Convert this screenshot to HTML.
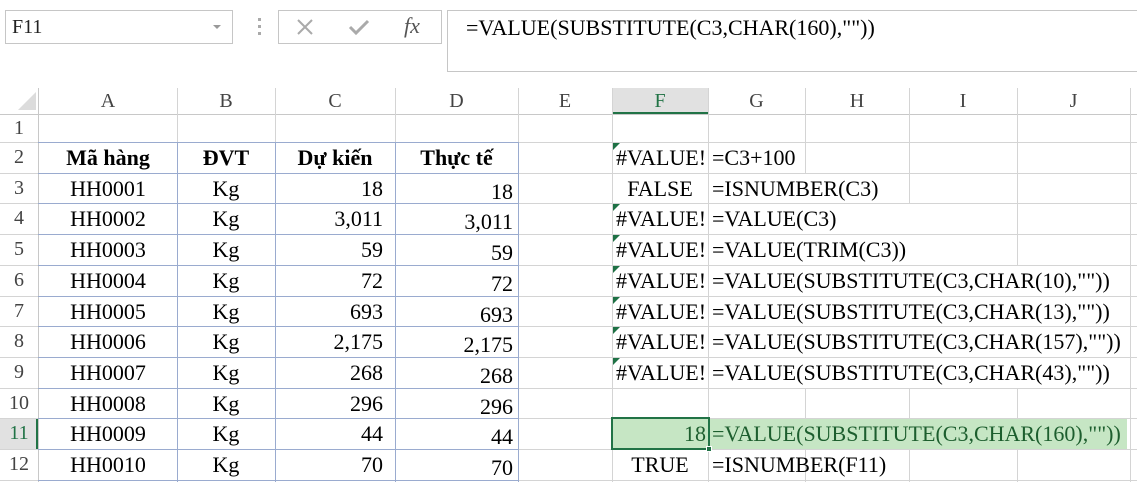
<!DOCTYPE html>
<html><head><meta charset="utf-8"><style>
body{margin:0;width:1137px;height:482px;background:#fff;position:relative;overflow:hidden;font-family:"Liberation Serif","Times New Roman","DejaVu Serif",serif;}
div{position:absolute;box-sizing:border-box;font-family:"Liberation Serif","Times New Roman","DejaVu Serif",serif;}
.h{height:1px;background:#d4d4d4;}
.v{width:1px;background:#d4d4d4;}
.bh{height:1px;background:#9aabcf;}
.bv{width:1px;background:#9aabcf;}
.t{font-size:22px;line-height:31px;white-space:nowrap;color:#000;}
.c{text-align:center}.r{text-align:right}
.ch{top:88px;height:26px;font-size:20px;line-height:26px;text-align:center;color:#444;}
.rh{left:0;width:38px;font-size:20px;line-height:31px;text-align:center;color:#444;}
.tri{width:0;height:0;border-top:7px solid #1e7145;border-right:7px solid transparent;}
</style></head><body>
<div style="left:5px;top:10px;width:228px;height:34px;border:1px solid #c6c6c6;"></div>
<div class="t" style="left:12px;top:12px;font-size:20px;line-height:30px;color:#222">F11</div>
<div style="left:213px;top:25px;border-left:4px solid transparent;border-right:4px solid transparent;border-top:4px solid #999;"></div>
<div style="left:258px;top:18px;width:3px;height:3px;background:#aaa"></div>
<div style="left:258px;top:25px;width:3px;height:3px;background:#aaa"></div>
<div style="left:258px;top:32px;width:3px;height:3px;background:#aaa"></div>
<div style="left:278px;top:10px;width:164px;height:34px;border:1px solid #c6c6c6;"></div>
<svg style="position:absolute;left:296px;top:18px" width="18" height="18"><path d="M2 2L16 16M16 2L2 16" stroke="#aaa" stroke-width="2"/></svg>
<svg style="position:absolute;left:348px;top:18px" width="22" height="18"><path d="M2 9L8 15L20 3" stroke="#aaa" stroke-width="3" fill="none"/></svg>
<div style="left:404px;top:13px;font-size:22px;color:#555;font-style:italic;line-height:26px">fx</div>
<div style="left:447px;top:10px;width:700px;height:62px;border:1px solid #c6c6c6;"></div>
<div class="t" style="left:466px;top:11px;line-height:34px">=VALUE(SUBSTITUTE(C3,CHAR(160),""))</div>
<div style="left:18px;top:92px;width:0;height:0;border-bottom:18px solid #dcdcdc;border-left:18px solid transparent;"></div>
<div style="left:612px;top:88px;width:96px;height:26px;background:#e1e1e1;border-bottom:2px solid #217346;"></div>
<div style="left:0;top:418px;width:38px;height:31px;background:#e1e1e1;border-right:2px solid #217346;"></div>
<div class="h" style="left:0;top:114px;width:1137px;background:#c8c8c8"></div>
<div class="v" style="left:38px;top:88px;height:394px;background:#c8c8c8"></div>
<div class="v" style="left:177px;top:88px;height:26px"></div>
<div class="v" style="left:275px;top:88px;height:26px"></div>
<div class="v" style="left:395px;top:88px;height:26px"></div>
<div class="v" style="left:518px;top:88px;height:26px"></div>
<div class="v" style="left:612px;top:88px;height:26px"></div>
<div class="v" style="left:708px;top:88px;height:26px"></div>
<div class="v" style="left:805px;top:88px;height:26px"></div>
<div class="v" style="left:909px;top:88px;height:26px"></div>
<div class="v" style="left:1017px;top:88px;height:26px"></div>
<div class="v" style="left:1130px;top:88px;height:26px"></div>
<div class="ch" style="left:39px;width:138px">A</div>
<div class="ch" style="left:177px;width:98px">B</div>
<div class="ch" style="left:275px;width:120px">C</div>
<div class="ch" style="left:395px;width:123px">D</div>
<div class="ch" style="left:518px;width:94px">E</div>
<div class="ch" style="left:612px;width:96px;color:#217346">F</div>
<div class="ch" style="left:708px;width:97px">G</div>
<div class="ch" style="left:805px;width:104px">H</div>
<div class="ch" style="left:909px;width:108px">I</div>
<div class="ch" style="left:1017px;width:113px">J</div>
<div style="left:612px;top:418px;width:515px;height:31px;background:#c6e6c4;"></div>
<div class="h" style="left:0;top:142px;width:1137px"></div>
<div class="h" style="left:0;top:173px;width:1137px"></div>
<div class="h" style="left:0;top:203px;width:1137px"></div>
<div class="h" style="left:0;top:234px;width:1137px"></div>
<div class="h" style="left:0;top:265px;width:1137px"></div>
<div class="h" style="left:0;top:296px;width:1137px"></div>
<div class="h" style="left:0;top:326px;width:1137px"></div>
<div class="h" style="left:0;top:357px;width:1137px"></div>
<div class="h" style="left:0;top:388px;width:1137px"></div>
<div class="h" style="left:0;top:418px;width:1137px"></div>
<div class="h" style="left:0;top:449px;width:1137px"></div>
<div class="h" style="left:0;top:480px;width:1137px"></div>
<div class="v" style="left:177px;top:114px;height:368px"></div>
<div class="v" style="left:275px;top:114px;height:368px"></div>
<div class="v" style="left:395px;top:114px;height:368px"></div>
<div class="v" style="left:518px;top:114px;height:368px"></div>
<div class="v" style="left:612px;top:114px;height:368px"></div>
<div class="v" style="left:708px;top:114px;height:368px"></div>
<div class="v" style="left:805px;top:114px;height:60px"></div>
<div class="v" style="left:909px;top:114px;height:90px"></div>
<div class="v" style="left:805px;top:388px;height:31px"></div>
<div class="v" style="left:805px;top:449px;height:33px"></div>
<div class="v" style="left:909px;top:388px;height:31px"></div>
<div class="v" style="left:909px;top:449px;height:33px"></div>
<div class="v" style="left:1017px;top:114px;height:152px"></div>
<div class="v" style="left:1017px;top:388px;height:31px"></div>
<div class="v" style="left:1017px;top:449px;height:33px"></div>
<div class="v" style="left:1130px;top:114px;height:368px"></div>
<div class="bh" style="left:38px;top:142px;width:481px"></div>
<div class="bh" style="left:38px;top:173px;width:481px"></div>
<div class="bh" style="left:38px;top:203px;width:481px"></div>
<div class="bh" style="left:38px;top:234px;width:481px"></div>
<div class="bh" style="left:38px;top:265px;width:481px"></div>
<div class="bh" style="left:38px;top:296px;width:481px"></div>
<div class="bh" style="left:38px;top:326px;width:481px"></div>
<div class="bh" style="left:38px;top:357px;width:481px"></div>
<div class="bh" style="left:38px;top:388px;width:481px"></div>
<div class="bh" style="left:38px;top:418px;width:481px"></div>
<div class="bh" style="left:38px;top:449px;width:481px"></div>
<div class="bh" style="left:38px;top:480px;width:481px"></div>
<div class="bv" style="left:177px;top:142px;height:340px"></div>
<div class="bv" style="left:275px;top:142px;height:340px"></div>
<div class="bv" style="left:395px;top:142px;height:340px"></div>
<div class="bv" style="left:518px;top:142px;height:340px"></div>
<div class="rh" style="top:114px;line-height:28px">1</div>
<div class="rh" style="top:142px">2</div>
<div class="rh" style="top:173px">3</div>
<div class="rh" style="top:203px">4</div>
<div class="rh" style="top:234px">5</div>
<div class="rh" style="top:265px">6</div>
<div class="rh" style="top:296px">7</div>
<div class="rh" style="top:326px">8</div>
<div class="rh" style="top:357px">9</div>
<div class="rh" style="top:388px">10</div>
<div class="rh" style="top:418px;color:#217346">11</div>
<div class="rh" style="top:449px">12</div>
<div class="t c" style="left:39px;top:142px;width:138px;font-weight:bold">Mã hàng</div>
<div class="t c" style="left:177px;top:142px;width:98px;font-weight:bold">ĐVT</div>
<div class="t c" style="left:275px;top:142px;width:120px;font-weight:bold">Dự kiến</div>
<div class="t c" style="left:395px;top:142px;width:123px;font-weight:bold">Thực tế</div>
<div class="t c" style="left:39px;top:173px;width:138px">HH0001</div><div class="t c" style="left:177px;top:173px;width:98px">Kg</div><div class="t r" style="left:275px;top:173px;width:108px">18</div><div class="t r" style="left:395px;top:176px;width:118px">18</div>
<div class="t c" style="left:39px;top:203px;width:138px">HH0002</div><div class="t c" style="left:177px;top:203px;width:98px">Kg</div><div class="t r" style="left:275px;top:203px;width:108px">3,011</div><div class="t r" style="left:395px;top:206px;width:118px">3,011</div>
<div class="t c" style="left:39px;top:234px;width:138px">HH0003</div><div class="t c" style="left:177px;top:234px;width:98px">Kg</div><div class="t r" style="left:275px;top:234px;width:108px">59</div><div class="t r" style="left:395px;top:237px;width:118px">59</div>
<div class="t c" style="left:39px;top:265px;width:138px">HH0004</div><div class="t c" style="left:177px;top:265px;width:98px">Kg</div><div class="t r" style="left:275px;top:265px;width:108px">72</div><div class="t r" style="left:395px;top:268px;width:118px">72</div>
<div class="t c" style="left:39px;top:296px;width:138px">HH0005</div><div class="t c" style="left:177px;top:296px;width:98px">Kg</div><div class="t r" style="left:275px;top:296px;width:108px">693</div><div class="t r" style="left:395px;top:299px;width:118px">693</div>
<div class="t c" style="left:39px;top:326px;width:138px">HH0006</div><div class="t c" style="left:177px;top:326px;width:98px">Kg</div><div class="t r" style="left:275px;top:326px;width:108px">2,175</div><div class="t r" style="left:395px;top:329px;width:118px">2,175</div>
<div class="t c" style="left:39px;top:357px;width:138px">HH0007</div><div class="t c" style="left:177px;top:357px;width:98px">Kg</div><div class="t r" style="left:275px;top:357px;width:108px">268</div><div class="t r" style="left:395px;top:360px;width:118px">268</div>
<div class="t c" style="left:39px;top:388px;width:138px">HH0008</div><div class="t c" style="left:177px;top:388px;width:98px">Kg</div><div class="t r" style="left:275px;top:388px;width:108px">296</div><div class="t r" style="left:395px;top:391px;width:118px">296</div>
<div class="t c" style="left:39px;top:418px;width:138px">HH0009</div><div class="t c" style="left:177px;top:418px;width:98px">Kg</div><div class="t r" style="left:275px;top:418px;width:108px">44</div><div class="t r" style="left:395px;top:421px;width:118px">44</div>
<div class="t c" style="left:39px;top:449px;width:138px">HH0010</div><div class="t c" style="left:177px;top:449px;width:98px">Kg</div><div class="t r" style="left:275px;top:449px;width:108px">70</div><div class="t r" style="left:395px;top:452px;width:118px">70</div>
<div class="tri" style="left:613px;top:143px"></div>
<div class="t" style="left:616px;top:142px">#VALUE!</div><div class="t" style="left:712px;top:142px">=C3+100</div>
<div class="t c" style="left:612px;top:173px;width:96px">FALSE</div><div class="t" style="left:712px;top:173px">=ISNUMBER(C3)</div>
<div class="tri" style="left:613px;top:204px"></div>
<div class="t" style="left:616px;top:203px">#VALUE!</div><div class="t" style="left:712px;top:203px">=VALUE(C3)</div>
<div class="tri" style="left:613px;top:235px"></div>
<div class="t" style="left:616px;top:234px">#VALUE!</div><div class="t" style="left:712px;top:234px">=VALUE(TRIM(C3))</div>
<div class="tri" style="left:613px;top:266px"></div>
<div class="t" style="left:616px;top:265px">#VALUE!</div><div class="t" style="left:712px;top:265px">=VALUE(SUBSTITUTE(C3,CHAR(10),""))</div>
<div class="tri" style="left:613px;top:297px"></div>
<div class="t" style="left:616px;top:296px">#VALUE!</div><div class="t" style="left:712px;top:296px">=VALUE(SUBSTITUTE(C3,CHAR(13),""))</div>
<div class="tri" style="left:613px;top:327px"></div>
<div class="t" style="left:616px;top:326px">#VALUE!</div><div class="t" style="left:712px;top:326px">=VALUE(SUBSTITUTE(C3,CHAR(157),""))</div>
<div class="tri" style="left:613px;top:358px"></div>
<div class="t" style="left:616px;top:357px">#VALUE!</div><div class="t" style="left:712px;top:357px">=VALUE(SUBSTITUTE(C3,CHAR(43),""))</div>
<div style="left:611px;top:417px;width:99px;height:33px;border:2px solid #217346;"></div>
<div style="left:706px;top:446px;width:6px;height:6px;background:#217346;border:1px solid #fff"></div>
<div class="t r" style="left:612px;top:418px;width:94px;color:#1d5e2e">18</div><div class="t" style="left:712px;top:418px;color:#1d5e2e">=VALUE(SUBSTITUTE(C3,CHAR(160),""))</div>
<div class="t c" style="left:612px;top:449px;width:96px">TRUE</div><div class="t" style="left:712px;top:449px">=ISNUMBER(F11)</div>
</body></html>
